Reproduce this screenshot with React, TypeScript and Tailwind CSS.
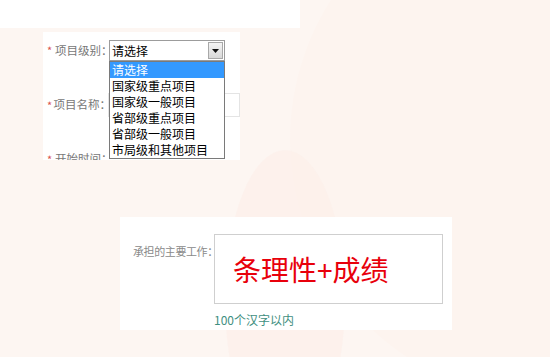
import React from 'react';

const options = ['请选择', '国家级重点项目', '国家级一般项目', '省部级重点项目', '省部级一般项目', '市局级和其他项目'];

const cjk = { fontFamily: '"Noto Sans CJK SC", "Liberation Sans", sans-serif' };

export default function App() {
  return (
    <div className="relative w-[550px] h-[357px] overflow-hidden bg-[#fdf6f2]" style={cjk}>
      {/* faint background decoration */}
      <div className="absolute -top-[120px] left-[290px] w-[520px] h-[520px] rounded-full bg-[#fdf4ef]" />
      <div className="absolute top-[150px] left-[225px] w-[120px] h-[300px] rounded-[50%] bg-[#fcf0ea] opacity-70" />
      <div className="absolute top-0 left-0 w-[300px] h-[28px] bg-white" />

      <div className="relative flex flex-col">
        {/* top form panel */}
        <div className="ml-[43px] mt-[32px] w-[197px] h-[128px] bg-white overflow-hidden">
          <div className="flex flex-col pt-[8px]">
            <div className="flex items-center h-[21px]">
              <span className="w-[12px] pl-[4px] text-[11px] text-[#d9534f]">*</span>
              <span className="w-[54px] whitespace-nowrap text-[11.5px] text-[#777]">项目级别：</span>
              <div className="relative w-[116px] h-[21px]">
                <div className="flex items-center h-full border border-[#9c9c9c] bg-white">
                  <span className="flex-1 pl-[2px] text-[12px] leading-none text-black">请选择</span>
                  <span className="flex items-center justify-center w-[15px] h-[17px] mr-[1px] border border-[#a8a8a8] bg-gradient-to-b from-[#f4f4f4] to-[#d8d8d8]">
                    <svg width="7" height="4" viewBox="0 0 7 4"><path d="M0 0h7L3.5 4z" fill="#111" /></svg>
                  </span>
                </div>
                <div className="absolute top-[21px] left-0 w-full z-10 border border-[#7a7a7a] bg-white">
                  {options.map((o, i) => (
                    <div key={o} className={`h-[16px] pl-[2px] text-[12px] leading-[16px] whitespace-nowrap ${i === 0 ? 'bg-[#3399ff] text-white' : 'text-black'}`}>
                      {o}
                    </div>
                  ))}
                </div>
              </div>
            </div>

            <div className="flex items-center h-[24px] mt-[32px]">
              <span className="w-[12px] pl-[4px] text-[11px] text-[#d9534f]">*</span>
              <span className="w-[54px] whitespace-nowrap text-[11.5px] text-[#777]">项目名称：</span>
              <div className="w-[160px] h-[24px] border border-[#e4e4e4]" />
            </div>

            <div className="flex items-center h-[24px] mt-[30px]">
              <span className="w-[12px] pl-[4px] text-[11px] text-[#d9534f]">*</span>
              <span className="w-[54px] whitespace-nowrap text-[11.5px] text-[#777]">开始时间：</span>
            </div>
          </div>
        </div>

        {/* bottom panel */}
        <div className="ml-[120px] mt-[57px] w-[332px] h-[113px] bg-white flex pt-[17px]">
          <span className="w-[94px] pl-[13px] pt-[9px] whitespace-nowrap text-[11px] text-[#8a8a8a] tracking-[-0.4px]">承担的主要工作：</span>
          <div className="flex flex-col">
            <div className="w-[229px] h-[70px] border border-[#cfcfcf] flex items-center pl-[18px]">
              <span className="text-[28px] leading-none text-[#e8000b]">条理性+成绩</span>
            </div>
            <span className="mt-[7px] whitespace-nowrap text-[12px] text-[#3f8f7f]">100个汉字以内</span>
          </div>
        </div>
      </div>
    </div>
  );
}
